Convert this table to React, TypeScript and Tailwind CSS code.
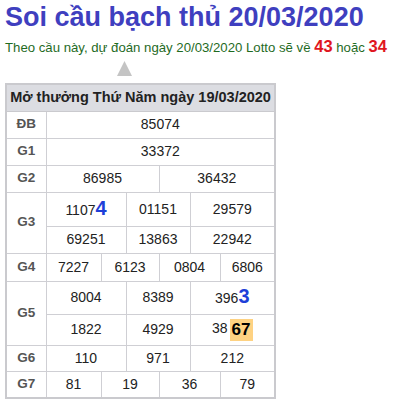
import React from 'react';

const Big: React.FC<{ children: React.ReactNode }> = ({ children }) => (
  <span className="text-[20px] font-bold text-[#1e3fd8] leading-none">{children}</span>
);

const App: React.FC = () => {
  const cell = 'border border-[#cfcfd4] text-center text-[14px] text-[#222] p-0';
  const label = 'border border-[#cfcfd4] text-center text-[13.5px] font-bold text-[#555] p-0';

  return (
    <div className="bg-white w-[393px] h-[402px] overflow-hidden px-[5px] pt-[2px]" style={{ fontFamily: '"Liberation Sans", Arial, sans-serif' }}>
      <h1 className="text-[27px] font-bold text-[#3f3fbf] leading-[31px] whitespace-nowrap">Soi cầu bạch thủ 20/03/2020</h1>
      <p className="text-[13.2px] text-[#1f6b1f] mt-[5px] leading-[17px] whitespace-nowrap">
        Theo cầu này, dự đoán ngày 20/03/2020 Lotto sẽ về{' '}
        <b className="text-[16.5px] text-[#e0161e]">43</b> hoặc{' '}
        <b className="text-[16.5px] text-[#e0161e]">34</b>
      </p>
      <div className="pl-[112px] mt-[5px] h-[15px] leading-none">
        <svg width="15" height="15" viewBox="0 0 15 15" className="block">
          <polygon points="7.5,0 15,15 0,15" fill="#c4c4c4" />
        </svg>
      </div>

      <table className="table-fixed border-collapse border-2 border-[#cacace] w-[269px] mt-[7px]">
        <colgroup>
          <col className="w-[40px]" />
          <col className="w-[55px]" />
          <col className="w-[25px]" />
          <col className="w-[33px]" />
          <col className="w-[31px]" />
          <col className="w-[30px]" />
          <col className="w-[55px]" />
        </colgroup>
        <tbody>
          <tr className="h-[27px] bg-[#dcdde2]">
            <td colSpan={7} className="border border-[#cacace] text-center text-[14.5px] font-bold text-[#222] p-0 whitespace-nowrap">
              Mở thưởng Thứ Năm ngày 19/03/2020
            </td>
          </tr>
          <tr className="h-[27px]">
            <td className={label}>ĐB</td>
            <td colSpan={6} className={cell}>85074</td>
          </tr>
          <tr className="h-[27px]">
            <td className={label}>G1</td>
            <td colSpan={6} className={cell}>33372</td>
          </tr>
          <tr className="h-[27px]">
            <td className={label}>G2</td>
            <td colSpan={3} className={cell}>86985</td>
            <td colSpan={3} className={cell}>36432</td>
          </tr>
          <tr className="h-[34px]">
            <td rowSpan={2} className={label}>G3</td>
            <td colSpan={2} className={cell}>
              1107<Big>4</Big>
            </td>
            <td colSpan={2} className={cell}>01151</td>
            <td colSpan={2} className={cell}>29579</td>
          </tr>
          <tr className="h-[27px]">
            <td colSpan={2} className={cell}>69251</td>
            <td colSpan={2} className={cell}>13863</td>
            <td colSpan={2} className={cell}>22942</td>
          </tr>
          <tr className="h-[28px]">
            <td className={label}>G4</td>
            <td className={cell}>7227</td>
            <td colSpan={2} className={cell}>6123</td>
            <td colSpan={2} className={cell}>0804</td>
            <td className={cell}>6806</td>
          </tr>
          <tr className="h-[33px]">
            <td rowSpan={2} className={label}>G5</td>
            <td colSpan={2} className={cell}>8004</td>
            <td colSpan={2} className={cell}>8389</td>
            <td colSpan={2} className={cell}>
              396<Big>3</Big>
            </td>
          </tr>
          <tr className="h-[31px]">
            <td colSpan={2} className={cell}>1822</td>
            <td colSpan={2} className={cell}>4929</td>
            <td colSpan={2} className={cell}>
              38
              <span className="inline-block align-middle ml-[2px] bg-[#fed282] font-bold text-[17px] text-black px-[2px] leading-[22px]">67</span>
            </td>
          </tr>
          <tr className="h-[26px]">
            <td className={label}>G6</td>
            <td colSpan={2} className={cell}>110</td>
            <td colSpan={2} className={cell}>971</td>
            <td colSpan={2} className={cell}>212</td>
          </tr>
          <tr className="h-[27px]">
            <td className={label}>G7</td>
            <td className={cell}>81</td>
            <td colSpan={2} className={cell}>19</td>
            <td colSpan={2} className={cell}>36</td>
            <td className={cell}>79</td>
          </tr>
        </tbody>
      </table>
    </div>
  );
};

export default App;
